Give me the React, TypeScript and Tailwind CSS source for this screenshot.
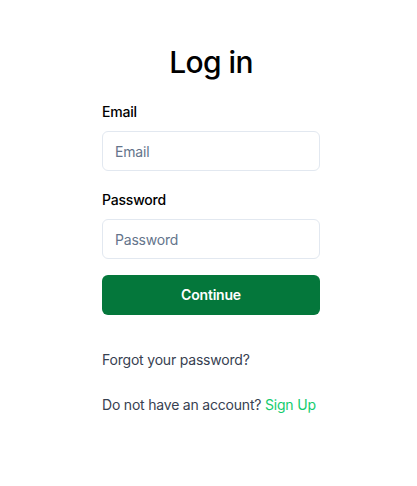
import React from "react";

export default function App() {
  return (
    <div className="min-h-[486px] w-full bg-white pl-[5px]" style={{ fontFamily: "Inter, 'Noto Sans', sans-serif" }}>
      <div className="mx-auto w-[218px] pt-[44px] tracking-[-0.2px]">
        <h1 className="text-center text-[30px] leading-[36px] font-medium tracking-[-0.6px] text-black">Log in</h1>
        <form className="mt-[22px]" onSubmit={(e) => e.preventDefault()}>
          <label className="block text-sm leading-5 font-medium text-black">Email</label>
          <input
            type="email"
            placeholder="Email"
            className="mt-[9px] block h-10 w-full rounded-md border border-[#e2e8f0] bg-white px-3 text-sm tracking-[-0.2px] text-black placeholder:text-[#64748b] outline-none"
          />
          <label className="mt-[19px] block text-sm leading-5 font-medium text-black">Password</label>
          <input
            type="password"
            placeholder="Password"
            className="mt-[9px] block h-10 w-full rounded-md border border-[#e2e8f0] bg-white px-3 text-sm tracking-[-0.2px] text-black placeholder:text-[#64748b] outline-none"
          />
          <button
            type="submit"
            className="mt-4 flex h-10 w-full items-center justify-center rounded-md bg-[#04773b] text-sm font-semibold tracking-[-0.2px] text-white"
          >
            Continue
          </button>
        </form>
        <p className="mt-[35px] text-sm leading-5 text-[#374151]">Forgot your password?</p>
        <p className="mt-[25px] whitespace-nowrap text-sm leading-5 text-[#374151]">
          Do not have an account? <a className="text-[#14cc6e]" href="#">Sign Up</a>
        </p>
      </div>
    </div>
  );
}
